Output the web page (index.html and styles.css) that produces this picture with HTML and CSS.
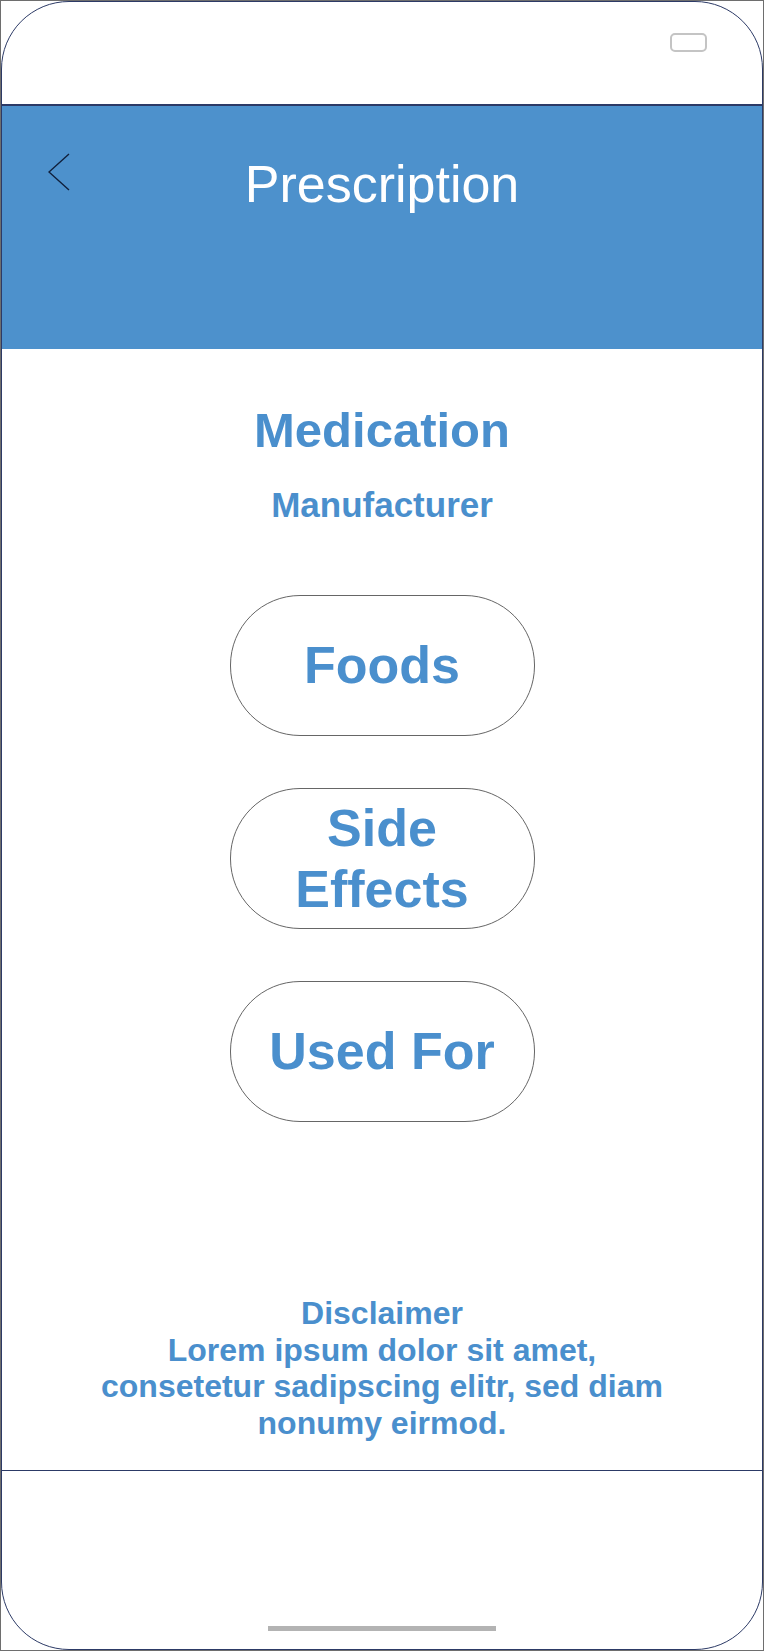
FILE: index.html
```html
<!DOCTYPE html>
<html lang="en">
<head>
<meta charset="utf-8">
<title>Prescription</title>
<link rel="stylesheet" href="styles.css">
</head>
<body>
<div class="device">
  <div class="frame">
    <div class="status-bar">
      <span class="battery"></span>
    </div>
    <header class="app-header">
      <div class="back">
        <svg width="30" height="40" viewBox="0 0 30 40" aria-hidden="true">
          <polyline points="21,1 1,19 21,37" fill="none" stroke="#10203c" stroke-width="1.4"/>
        </svg>
      </div>
      <h1 class="title">Prescription</h1>
      <div class="spacer"></div>
    </header>
    <main class="content">
      <h2 class="med-name">Medication</h2>
      <p class="manufacturer">Manufacturer</p>
      <div class="pills">
        <button class="pill">Foods</button>
        <button class="pill">Side<br>Effects</button>
        <button class="pill">Used For</button>
      </div>
      <p class="disclaimer">Disclaimer<br>Lorem ipsum dolor sit amet,<br>consetetur sadipscing elitr, sed diam<br>nonumy eirmod.</p>
    </main>
    <footer class="bottom-bar">
      <span class="home-indicator"></span>
    </footer>
  </div>
</div>
</body>
</html>
```

FILE: styles.css
```css
* {
  box-sizing: border-box;
}

html, body {
  margin: 0;
  padding: 0;
  background: #ffffff;
}

body {
  font-family: "Liberation Sans", Arial, sans-serif;
}

.device {
  width: 764px;
  height: 1651px;
  border: 1px solid #6e6e6e;
}

.frame {
  height: 100%;
  border: 1px solid #2c3a66;
  border-radius: 68px;
  overflow: hidden;
  display: flex;
  flex-direction: column;
}

.status-bar {
  height: 104px;
  border-bottom: 2px solid #2c3a66;
  display: flex;
  justify-content: flex-end;
  align-items: flex-start;
  padding: 31px 55px 0 0;
}

.battery {
  width: 37px;
  height: 19px;
  border: 2px solid #c4c4c4;
  border-radius: 5px;
}

.app-header {
  height: 243px;
  background: #4d91cc;
  display: grid;
  grid-template-columns: 1fr auto 1fr;
  align-items: start;
}

.back {
  padding: 47px 0 0 46px;
}

.back svg {
  display: block;
}

.title {
  margin: 0;
  padding-top: 48px;
  font-size: 52px;
  line-height: 60px;
  font-weight: normal;
  color: #ffffff;
}

.content {
  flex: 1;
  display: flex;
  flex-direction: column;
  align-items: center;
  color: #4a8fcd;
  font-weight: bold;
  padding-bottom: 29px;
}

.med-name {
  margin: 52px 0 0;
  font-size: 49px;
  line-height: 58px;
  font-weight: bold;
}

.manufacturer {
  margin: 26px 0 0;
  font-size: 35px;
  line-height: 40px;
}

.pills {
  margin-top: 70px;
  display: flex;
  flex-direction: column;
  gap: 52px;
}

.pill {
  width: 305px;
  height: 141px;
  border: 1px solid #666666;
  border-radius: 70px;
  background: #ffffff;
  font-family: "Liberation Sans", Arial, sans-serif;
  font-weight: bold;
  font-size: 52px;
  line-height: 61px;
  color: #4a8fcd;
  padding: 0;
  display: flex;
  align-items: center;
  justify-content: center;
  text-align: center;
}

.disclaimer {
  margin: auto 0 0;
  text-align: center;
  font-size: 32px;
  line-height: 36.5px;
}

.bottom-bar {
  height: 179px;
  border-top: 1px solid #2c3a66;
  display: flex;
  justify-content: center;
  padding-top: 155px;
}

.home-indicator {
  width: 228px;
  height: 5px;
  background: #b3b3b3;
}
```
